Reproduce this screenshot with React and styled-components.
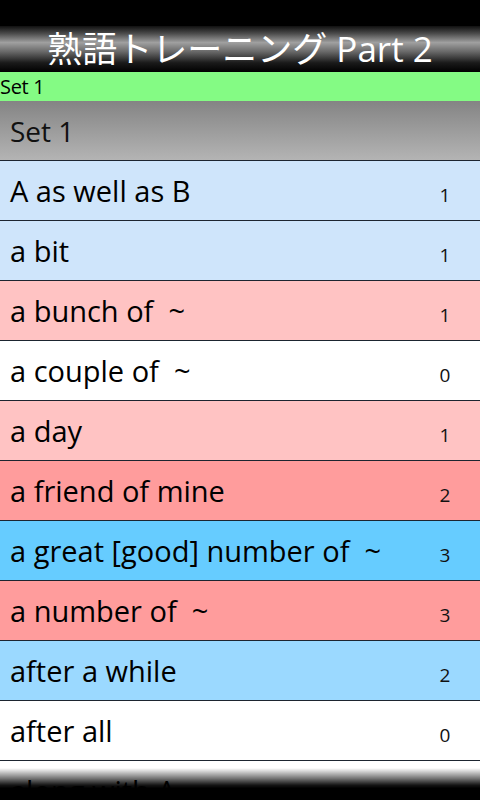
import React from "react";
import styled, { createGlobalStyle } from "styled-components";

const Global = createGlobalStyle`
  html, body { margin: 0; padding: 0; background: #000; }
  body { font-family: "Open Sans", "Noto Sans", "Noto Sans CJK JP", sans-serif; }
`;

const Screen = styled.div`
  width: 480px;
  height: 800px;
  overflow: hidden;
  display: flex;
  flex-direction: column;
  background: #000;
`;

const StatusBar = styled.div`
  height: 26px;
  flex: none;
  background: #000;
`;

const TitleBar = styled.div`
  height: 46px;
  flex: none;
  display: flex;
  align-items: center;
  justify-content: center;
  background: linear-gradient(#101010 0%, #4a4a4a 16%, #a0a0a0 36%, #686868 56%, #1a1a1a 80%, #000 100%);
  color: #fff;
  font-family: "Open Sans", "Noto Sans CJK JP", sans-serif;
  font-size: 35px;
  line-height: 1;
  padding-bottom: 2px;
  box-sizing: border-box;
  white-space: pre;
`;

const SubBar = styled.div`
  height: 29px;
  flex: none;
  display: flex;
  align-items: center;
  background: #84fb84;
  color: #000;
  font-size: 20px;
  letter-spacing: -0.3px;
`;

const List = styled.div`
  position: relative;
  flex: 1;
  overflow: hidden;
  background: #fff;
`;

const Header = styled.div`
  height: 59px;
  display: flex;
  align-items: center;
  padding-left: 10px;
  background: linear-gradient(#848484, #b4b4b4);
  color: #111;
  font-size: 28px;
`;

const Row = styled.div`
  border-top: 1px solid #1d2530;
  display: flex;
  align-items: baseline;
  padding: 13px 28px 0 10px;
  height: 46px;
  background: ${(p) => p.$bg};
  color: #000;
`;

const Label = styled.span`
  flex: 1;
  font-size: 29px;
  line-height: 1.15;
  white-space: pre;
`;

const Count = styled.span`
  font-size: 19px;
  width: 14px;
  text-align: center;
  color: #111;
`;

const Fade = styled.div`
  position: absolute;
  left: 0;
  right: 0;
  bottom: 0;
  height: 39px;
  background: linear-gradient(rgba(0,0,0,0) 0%, rgba(0,0,0,0) 18%, rgba(0,0,0,0.55) 45%, rgba(0,0,0,0.92) 62%, #000 70%);
  pointer-events: none;
`;

const items = [
  { t: "A as well as B", n: 1, bg: "#cfe5fb" },
  { t: "a bit", n: 1, bg: "#cfe5fb" },
  { t: "a bunch of  ~", n: 1, bg: "#ffc3c3" },
  { t: "a couple of  ~", n: 0, bg: "#ffffff" },
  { t: "a day", n: 1, bg: "#ffc3c3" },
  { t: "a friend of mine", n: 2, bg: "#ff9c9c" },
  { t: "a great [good] number of  ~", n: 3, bg: "#66ccff" },
  { t: "a number of  ~", n: 3, bg: "#ff9c9c" },
  { t: "after a while", n: 2, bg: "#9bd9ff" },
  { t: "after all", n: 0, bg: "#ffffff" },
  { t: "along with A", n: 1, bg: "#ffffff" },
];

export default function App() {
  return (
    <Screen>
      <Global />
      <StatusBar />
      <TitleBar>熟語トレーニング Part 2</TitleBar>
      <SubBar>Set 1</SubBar>
      <List>
        <Header>Set 1</Header>
        {items.map((it, i) => (
          <Row key={i} $bg={it.bg}>
            <Label>{it.t}</Label>
            <Count>{it.n}</Count>
          </Row>
        ))}
        <Fade />
      </List>
    </Screen>
  );
}
